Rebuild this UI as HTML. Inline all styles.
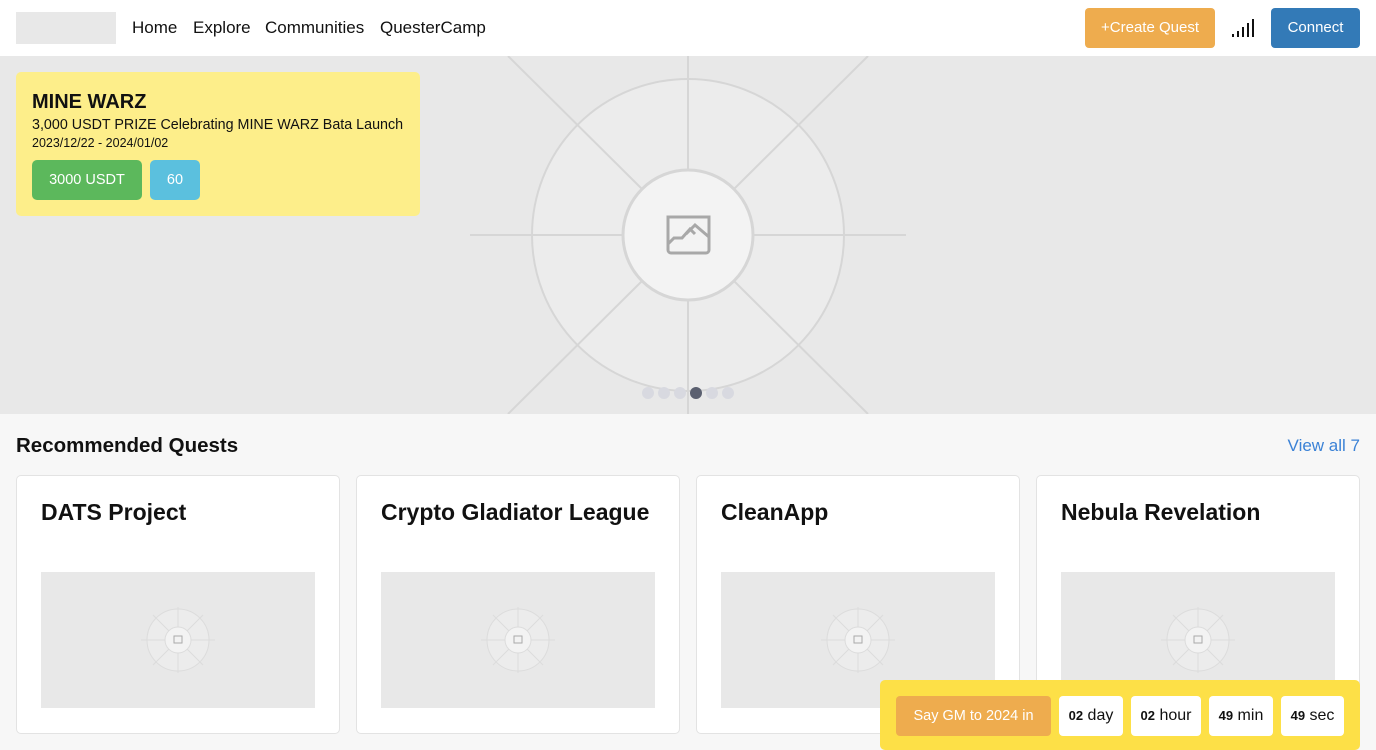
<!DOCTYPE html>
<html><head><meta charset="utf-8"><style>
*{box-sizing:border-box;margin:0;padding:0}
body{width:1376px;height:750px;overflow:hidden;background:#f7f7f7;font-family:"Liberation Sans",sans-serif;color:#111;position:relative}
.nav{position:absolute;left:0;top:0;width:1376px;height:56px;background:#fff}
.logo{position:absolute;left:16px;top:12px;width:100px;height:32px;background:#e8e8e8}
.nav a{position:absolute;top:18px;font-size:17px;color:#111}
.btn{position:absolute;border-radius:4px;color:#fff;font-size:15px;text-align:center}
.hero{position:absolute;left:0;top:56px;width:1376px;height:358px;background:#e8e8e8;overflow:hidden}
.promo{position:absolute;left:16px;top:72px;width:404px;height:144px;background:#fdee8a;border-radius:5px}
.promo h1{position:absolute;left:16px;top:19px;font-size:20px;font-weight:bold}
.promo .s{position:absolute;left:16px;top:45px;font-size:14.3px}
.promo .d{position:absolute;left:16px;top:64px;font-size:12.5px}
.tag{position:absolute;top:88px;height:40px;line-height:40px;border-radius:5px;color:#fff;font-size:14.5px;text-align:center}
h2{position:absolute;left:16px;top:434px;font-size:20.5px;font-weight:bold}
.va{position:absolute;right:16px;top:436px;font-size:17px;color:#3b82d6}
.card{position:absolute;top:475px;width:324px;height:259px;background:#fff;border:1px solid #e3e3e3;border-radius:5px}
.card h3{position:absolute;left:24px;top:23px;font-size:23px;font-weight:bold}
.card svg{position:absolute;left:24px;top:96px}
.cd{position:absolute;left:880px;top:680px;width:480px;height:70px;background:#fde047;border-radius:5px}
.cd div{position:absolute;top:16px;height:40px;line-height:40px;border-radius:4px;background:#fff;font-size:16px;text-align:center}
.cd b{font-size:13px}
</style></head><body>
<div class="nav">
<div class="logo"></div>
<a style="left:132px">Home</a><a style="left:193px">Explore</a><a style="left:265px">Communities</a><a style="left:380px">QuesterCamp</a>
<div class="btn" style="left:1085px;top:8px;width:130px;height:40px;line-height:40px;background:#eeac4e">+Create Quest</div>
<svg style="position:absolute;left:1232px;top:18px" width="24" height="20"><rect x="0" y="16" width="2" height="3" fill="#111"/><rect x="5" y="13" width="2" height="6" fill="#111"/><rect x="10" y="9" width="2" height="10" fill="#111"/><rect x="15" y="5" width="2" height="14" fill="#111"/><rect x="20" y="1" width="2" height="18" fill="#111"/></svg>
<div class="btn" style="left:1271px;top:8px;width:89px;height:40px;line-height:40px;background:#337ab7">Connect</div>
</div>
<div class="hero">
<svg width="1376" height="358" style="position:absolute;left:0;top:0">
<g stroke="#d6d6d6" stroke-width="2" fill="none">
<circle cx="688" cy="179" r="156" fill="#ececec"/>
<line x1="688" y1="0" x2="688" y2="114"/><line x1="688" y1="244" x2="688" y2="358"/>
<line x1="470" y1="179" x2="623" y2="179"/><line x1="753" y1="179" x2="906" y2="179"/>
<line x1="508" y1="0" x2="642" y2="133"/><line x1="868" y1="0" x2="734" y2="133"/>
<line x1="508" y1="358" x2="642" y2="225"/><line x1="868" y1="358" x2="734" y2="225"/>
<circle cx="688" cy="179" r="65" fill="#f3f3f3" stroke-width="3"/>
</g>
<g stroke="#a8a8a8" stroke-width="3" fill="none"><path d="M668 161h41v33a3 3 0 0 1-3 3h-35a3 3 0 0 1-3-3z"/><path d="M668 188l6-6h8l8-9 5 5M686 178l9-9 14 12"/></g>
<circle cx="648" cy="337" r="6" fill="#d8d9e0"/><circle cx="664" cy="337" r="6" fill="#d8d9e0"/><circle cx="680" cy="337" r="6" fill="#d8d9e0"/><circle cx="696" cy="337" r="6" fill="#5b6070"/><circle cx="712" cy="337" r="6" fill="#d8d9e0"/><circle cx="728" cy="337" r="6" fill="#d8d9e0"/>
</svg>
</div>
<div class="promo"><h1>MINE WARZ</h1><div class="s">3,000 USDT PRIZE Celebrating MINE WARZ Bata Launch</div><div class="d">2023/12/22 - 2024/01/02</div>
<div class="tag" style="left:16px;width:110px;background:#5cb85c">3000 USDT</div><div class="tag" style="left:134px;width:50px;background:#5bc0de">60</div></div>
<h2>Recommended Quests</h2><div class="va">View all 7</div>
<svg width="0" height="0" style="position:absolute"><defs><g id="ph"><rect width="274" height="136" fill="#e8e8e8"/><g stroke="#dcdcdc" stroke-width="1" fill="none"><circle cx="137" cy="68" r="31" fill="#ececec"/><line x1="137" y1="35" x2="137" y2="101"/><line x1="100" y1="68" x2="174" y2="68"/><line x1="112" y1="43" x2="162" y2="93"/><line x1="162" y1="43" x2="112" y2="93"/><circle cx="137" cy="68" r="13" fill="#f3f3f3"/></g><rect x="133" y="64" width="8" height="7" fill="none" stroke="#aaa" stroke-width="1"/></g></defs></svg>
<div class="card" style="left:16px"><h3>DATS Project</h3><svg width="274" height="136"><use href="#ph"/></svg></div>
<div class="card" style="left:356px"><h3>Crypto Gladiator League</h3><svg width="274" height="136"><use href="#ph"/></svg></div>
<div class="card" style="left:696px"><h3>CleanApp</h3><svg width="274" height="136"><use href="#ph"/></svg></div>
<div class="card" style="left:1036px"><h3>Nebula Revelation</h3><svg width="274" height="136"><use href="#ph"/></svg></div>
<div class="cd">
<div style="left:16px;width:155px;background:#eeac4e;color:#fff;font-size:14.5px">Say GM to 2024 in</div>
<div style="left:179px;width:64px"><b>02</b> day</div>
<div style="left:251px;width:70px"><b>02</b> hour</div>
<div style="left:329px;width:64px"><b>49</b> min</div>
<div style="left:401px;width:63px"><b>49</b> sec</div>
</div>
</body></html>
